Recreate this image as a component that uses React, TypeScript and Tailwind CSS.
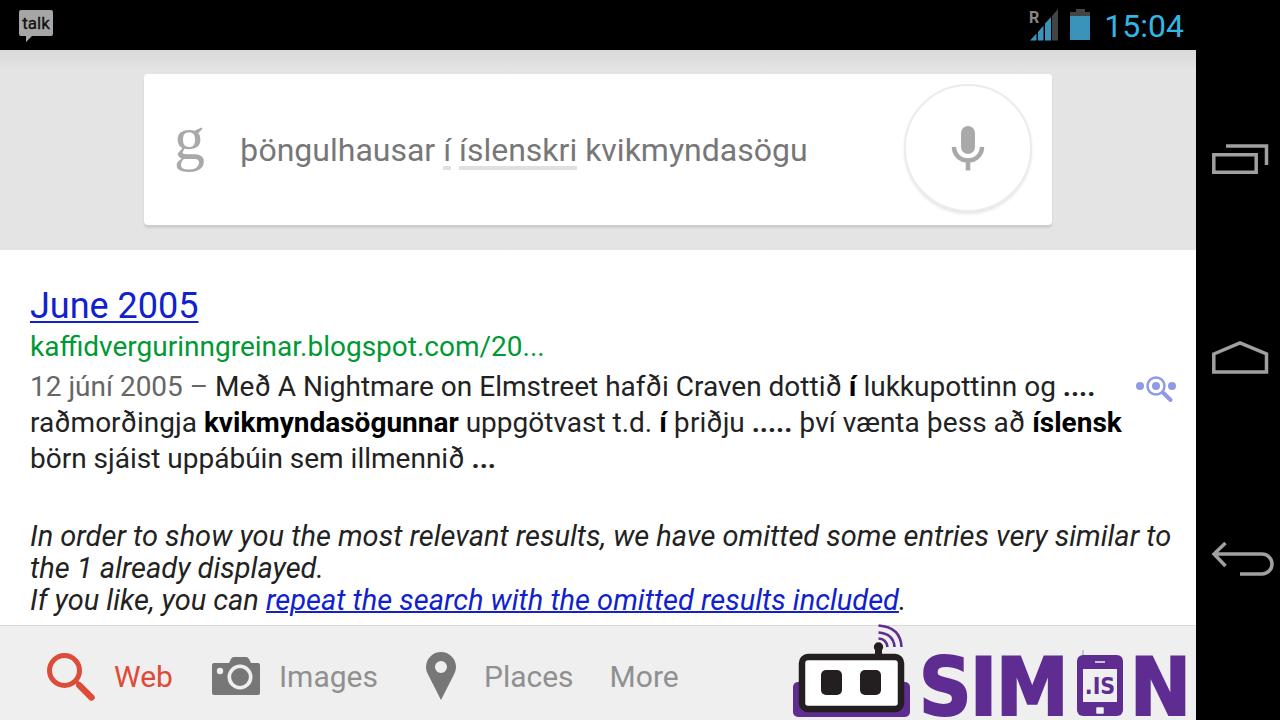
import { useState } from 'react';
import type { FormEvent } from 'react';

const tabs = [
    { name: 'Web', icon: WebIcon, active: true },
    { name: 'Images', icon: CameraIcon, active: false },
    { name: 'Places', icon: PinIcon, active: false },
];

export default function App() {
    return (
        <div className="flex h-screen overflow-hidden bg-black font-['Roboto','Liberation_Sans',sans-serif]">
            <div className="flex min-w-0 flex-1 flex-col bg-white">
                <StatusBar />
                <SearchHeader />
                <Results />
                <BottomTabs />
            </div>
            <SystemNav />
        </div>
    );
}

function StatusBar() {
    return (
        <header className="flex h-[50px] shrink-0 items-center justify-between bg-black pr-3 pl-[18px]">
            <svg width="36" height="34" viewBox="0 0 36 34" role="img" aria-label="Talk">
                <path d="M3 2h30a2 2 0 0 1 2 2v22a2 2 0 0 1-2 2H14l-6 6v-6H3a2 2 0 0 1-2-2V4a2 2 0 0 1 2-2z" fill="#a6a6a6" />
                <text x="18" y="21" textAnchor="middle" fontSize="17" fill="#111" stroke="#111" strokeWidth="0.300">talk</text>
            </svg>
            <div className="flex items-center">
                <svg width="28" height="34" viewBox="0 0 28 34" className="overflow-visible" role="img" aria-label="Signal, roaming">
                    <path d="M0 32.500L6.500 25.500v7zM8 24l5.500-6.500v15H8zM15 15.500l6-6.500v23.500h-6z" fill="#3a93b8" />
                    <path d="M22 8l6-7v31.500h-6z" fill="#444" />
                    <text x="-1" y="15" fontSize="16" fontWeight="700" fill="#888">R</text>
                </svg>
                <svg width="20" height="34" viewBox="0 0 20 34" className="ml-3" role="img" aria-label="Battery">
                    <path d="M6 1h9v3h5v7H0V4h6z" fill="#444" />
                    <path d="M0 8h20v24H0z" fill="#3a93b8" />
                </svg>
                <time className="ml-3.5 pt-0.5 text-[32px] leading-10 text-[#33b5e5]">15:04</time>
            </div>
        </header>
    );
}

function SearchHeader() {
    const [query, setQuery] = useState('þöngulhausar í íslenskri kvikmyndasögu');

    const submit = (e: FormEvent<HTMLFormElement>) => {
        e.preventDefault();
    };

    return (
        <div className="shrink-0 bg-linear-to-b from-[#d9d9d9] to-[#e4e4e4] to-10% px-36 pt-6 pb-[25px]">
            <form onSubmit={submit} className="flex h-[151px] items-center rounded bg-white pr-5 pl-[30px] shadow-[0_3px_2px_#cdcdcd]">
                <span aria-hidden="true" className="w-[66px] shrink-0 pb-6 font-['Liberation_Serif',serif] text-[62px] leading-[62px] text-[#a9a9a9]">g</span>
                <div className="relative min-w-0 flex-1">
                    <input
                        type="text"
                        aria-label="Search"
                        spellCheck={false}
                        value={query}
                        onChange={(e) => setQuery(e.target.value)}
                        className="block w-full bg-transparent text-[32px] leading-10 text-[#777] outline-none"
                    />
                    {/* spelling marks under the second and third word */}
                    <span className="absolute bottom-0 left-[203px] h-1 w-2 bg-[#e0e0e0]" />
                    <span className="absolute bottom-0 left-[219px] h-1 w-[118px] bg-[#e0e0e0]" />
                </div>
                <button type="button" aria-label="Voice search" className="mb-1 flex size-32 shrink-0 items-center justify-center rounded-full border-2 border-[#ececec] bg-white shadow-[0_2px_3px_#e6e6e6]">
                    <svg width="34" height="46" viewBox="0 0 34 46">
                        <rect x="10" y="1" width="14" height="28" rx="7" fill="#a9a9a9" />
                        <path d="M3 22a14 13.500 0 0 0 28 0M17 35v10.500" fill="none" stroke="#a9a9a9" strokeWidth="4.500" />
                    </svg>
                </button>
            </form>
        </div>
    );
}

function Results() {
    return (
        <main className="min-h-0 flex-1 overflow-hidden px-[30px] pt-[33px] text-[28px] leading-9 text-[#222]">
            <article>
                <h2 className="text-4xl leading-[46px]">
                    <a href="#june" className="text-[#1122cc] underline decoration-2 underline-offset-3">June 2005</a>
                </h2>
                <p className="text-[#093]">kaffidvergurinngreinar.blogspot.com/20...</p>
                <div className="mt-1 flex justify-between">
                    <p>
                        <span className="text-[#666]">12 júní 2005 – </span>
                        Með A Nightmare on Elmstreet hafði Craven dottið <b className="text-black">í</b> lukkupottinn og <b>....</b>
                        <br />
                        raðmorðingja <b className="text-black">kvikmyndasögunnar</b> uppgötvast t.d. <b className="text-black">í</b> þriðju <b>.....</b> því vænta þess að <b className="text-black">íslensk</b>
                        <br />
                        börn sjáist uppábúin sem illmennið <b>...</b>
                    </p>
                    <button type="button" aria-label="Preview result" className="-mr-3 h-9 shrink-0">
                        <svg width="44" height="30" viewBox="0 0 44 30" fill="#8f9ae6">
                            <circle cx="6" cy="14" r="4" />
                            <circle cx="22" cy="14" r="4" />
                            <circle cx="38" cy="14" r="4" />
                            <circle cx="22" cy="14" r="8.500" fill="none" stroke="#8f9ae6" strokeWidth="2.500" />
                            <path d="M29.500 21l7 7" stroke="#8f9ae6" strokeWidth="4" strokeLinecap="round" />
                        </svg>
                    </button>
                </div>
            </article>
            <p className="-mr-3 mt-[43px] text-[29px] leading-8 italic">
                In order to show you the most relevant results, we have omitted some entries very similar to
                <br />
                the 1 already displayed.
                <br />
                If you like, you can{' '}
                <a href="#omitted" className="text-[#1122cc] underline decoration-2">repeat the search with the omitted results included</a>.
            </p>
        </main>
    );
}

function BottomTabs() {
    return (
        <footer className="relative flex h-[95px] shrink-0 items-center border-t border-[#d8d8d8] bg-[#efefef] pt-2 pl-[46px]">
            <nav className="flex items-center text-[30px] leading-10 text-[#909090]">
                {tabs.map((tab) => (
                    <a key={tab.name} href={'#' + tab.name.toLowerCase()} className={tab.active ? 'mr-[38px] flex items-center gap-[18px] text-[#dd4b39]' : 'mr-[38px] flex items-center gap-[18px]'}>
                        <tab.icon />
                        {tab.name}
                    </a>
                ))}
                <button type="button" className="-ml-0.5">More</button>
            </nav>
            <SimonLogo />
        </footer>
    );
}

function WebIcon() {
    return (
        <svg width="50" height="50" viewBox="0 0 50 50">
            <circle cx="18.500" cy="18.500" r="15" fill="none" stroke="#dd4b39" strokeWidth="5" />
            <path d="M28 28l5 4" stroke="#dd4b39" strokeWidth="4" />
            <path d="M33.500 33.500l12 12" stroke="#dd4b39" strokeWidth="6.500" strokeLinecap="round" />
        </svg>
    );
}

function CameraIcon() {
    return (
        <svg width="50" height="50" viewBox="0 0 50 50">
            <path d="M3 11h15l2-4q.8-2 3-2h12q2 0 3 2l2 4h7a2 2 0 0 1 2 2v28a2 2 0 0 1-2 2H3a2 2 0 0 1-2-2V13a2 2 0 0 1 2-2z" fill="#777" />
            <circle cx="9" cy="19" r="3.200" fill="#efefef" />
            <circle cx="29" cy="25" r="10.700" fill="#777" stroke="#efefef" strokeWidth="3.600" />
        </svg>
    );
}

function PinIcon() {
    return (
        <svg width="50" height="50" viewBox="-9 1 50 50">
            <path d="M16 1a15 15 0 0 1 15 15c0 3-1 5.500-2.300 8L16 49 3.300 24C2 21.500 1 19 1 16A15 15 0 0 1 16 1zm0 9a6 6 0 1 0 0 12 6 6 0 0 0 0-12z" fill="#777" />
        </svg>
    );
}

function SimonLogo() {
    return (
        <svg width="396" height="98" viewBox="0 0 396 98" className="absolute right-2 bottom-0 overflow-visible" role="img" aria-label="Simon.is">
            <rect x="1" y="60" width="117" height="35" rx="5" fill="#5f2d91" />
            <rect x="10" y="35" width="99" height="52" rx="6" fill="#fff" stroke="#231f20" strokeWidth="6.500" />
            <rect x="29" y="48" width="21" height="25" rx="5" fill="#231f20" />
            <rect x="68" y="48" width="21" height="25" rx="5" fill="#231f20" />
            <path d="M83 25h7v9h-7z" fill="#231f20" />
            <circle cx="86.500" cy="25" r="4.700" fill="#231f20" />
            <path d="M86.500 16.500q8 .5 9 8.500M86.500 10.500q15 1 16 14.500M86.500 3.500q22 1.500 23 21.500" fill="none" stroke="#5f2d91" strokeWidth="2.600" />
            <g fill="#5f2d91" stroke="#5f2d91" strokeWidth="2" fontFamily="DejaVu Sans Condensed, Liberation Sans, sans-serif" fontSize="81" fontWeight="700">
                <text x="127" y="93">S</text>
                <text x="178" y="93">I</text>
                <text x="204" y="93">M</text>
                <text x="338" y="93">N</text>
            </g>
            <path d="M291 28v6" stroke="#bbb" strokeWidth="1.500" />
            <rect x="285" y="33" width="46" height="61" rx="6" fill="#5f2d91" />
            <path d="M303 40h10M305 86h6v5h-6z" stroke="#efefef" strokeWidth="1.500" fill="#efefef" strokeLinejoin="round" />
            <path d="M291 47h34v33h-34z" fill="#efefef" />
            <text x="308" y="72" textAnchor="middle" fill="#5f2d91" fontFamily="DejaVu Sans Condensed, Liberation Sans, sans-serif" fontSize="23" fontWeight="700">.IS</text>
        </svg>
    );
}

function SystemNav() {
    return (
        <nav aria-label="System" className="flex w-[84px] shrink-0 flex-col items-center justify-between bg-black pt-[142px] pb-[142px]">
            <button type="button" aria-label="Recent apps">
                <svg width="72" height="34" viewBox="-4 0 72 34" fill="none" stroke="#a0a0a0" strokeWidth="3.500">
                    <path d="M7.800 12.800h42.400v17.400H7.800zM20 4h40.500v19" />
                </svg>
            </button>
            <button type="button" aria-label="Home">
                <svg width="72" height="36" viewBox="-4 0 72 36" fill="none" stroke="#a0a0a0" strokeWidth="3.500">
                    <path d="M7.800 13L34 2l26.500 11v18H7.800z" />
                </svg>
            </button>
            <button type="button" aria-label="Back">
                <svg width="72" height="36" viewBox="-4 0 72 36" fill="none" stroke="#a0a0a0" strokeWidth="3.500">
                    <path d="M19.500 1L8 12l11.500 12M8 12h48a10 10 0 0 1 0 20H34" />
                </svg>
            </button>
        </nav>
    );
}
